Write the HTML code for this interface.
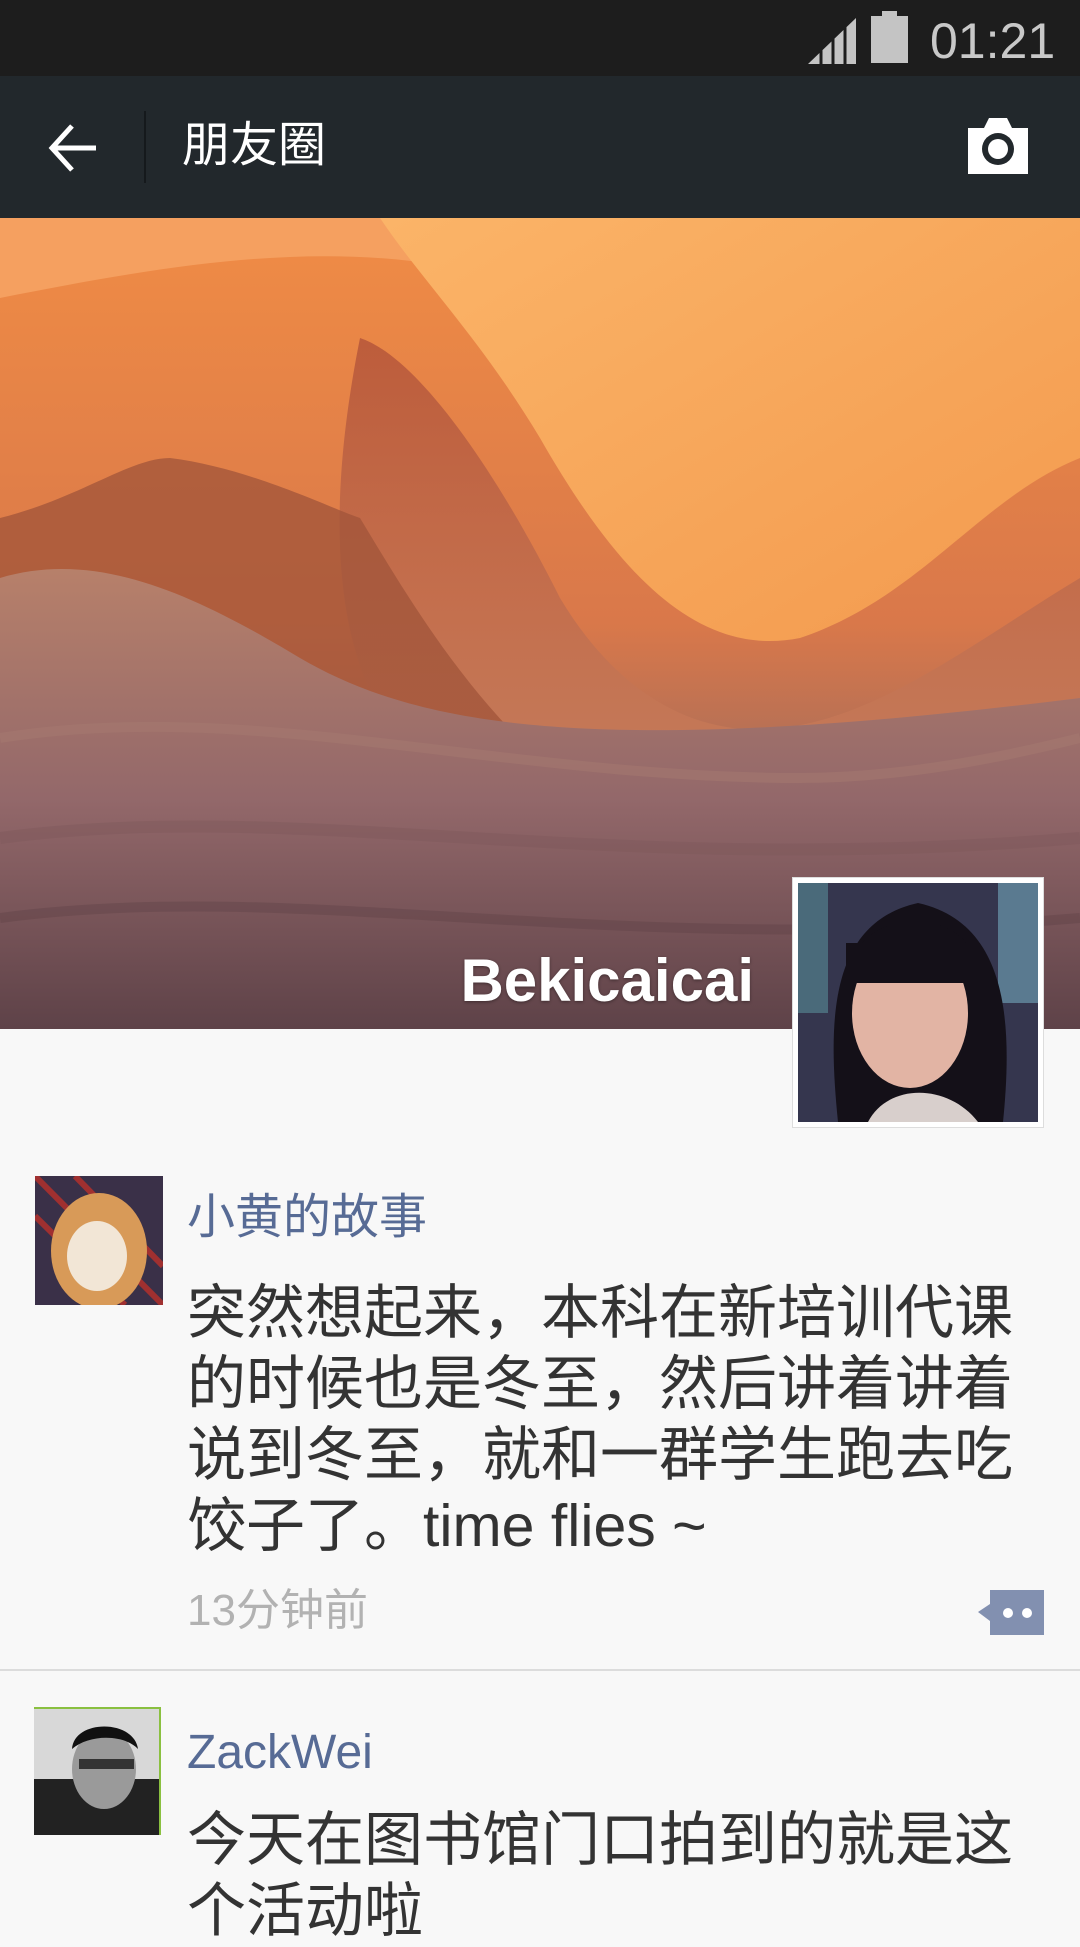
<!DOCTYPE html>
<html><head><meta charset="utf-8">
<style>
*{margin:0;padding:0;box-sizing:border-box}
body{width:1080px;height:1920px;overflow:hidden;background:#f8f8f8;font-family:"Liberation Sans","Noto Sans CJK SC",sans-serif;position:relative}
.abs{position:absolute}
.status{left:0;top:0;width:1080px;height:76px;background:#1d1d1d}
.nav{left:0;top:76px;width:1080px;height:142px;background:#22282c}
.cover{left:0;top:218px;width:1080px;height:811px;overflow:hidden}
.name{color:#576b95;font-size:48px;line-height:60px;white-space:nowrap}
.body{color:#333;font-size:59px;line-height:71px;white-space:nowrap}
</style></head><body>
<div class="abs status">
  <svg class="abs" style="left:808px;top:18px" width="50" height="46"><polygon points="48,0 48,46 0,46" fill="#c4c4c4"/><g stroke="#1d1d1d" stroke-width="3"><line x1="13" y1="0" x2="13" y2="46"/><line x1="25" y1="0" x2="25" y2="46"/><line x1="37" y1="0" x2="37" y2="46"/></g></svg>
  <div class="abs" style="left:882px;top:11px;width:15px;height:6px;background:#c4c4c4"></div>
  <div class="abs" style="left:871px;top:16px;width:37px;height:47px;background:#c4c4c4"></div>
  <div class="abs" style="left:930px;top:12px;font-size:50px;line-height:58px;color:#c8c8c8">01:21</div>
</div>
<div class="abs nav">
  <svg class="abs" style="left:46px;top:46px" width="54" height="52"><path d="M26 4 L6 26 L26 48 M6 26 H50" stroke="#fff" stroke-width="5" fill="none" stroke-linejoin="miter"/></svg>
  <div class="abs" style="left:144px;top:35px;width:2px;height:72px;background:#15191c"></div>
  <div class="abs" style="left:182px;top:40px;font-size:48px;line-height:60px;color:#fff">朋友圈</div>
  <svg class="abs" style="left:964px;top:42px" width="68" height="56"><path d="M4 10 H20 L25 0 H43 L48 10 H64 V56 H4 Z" fill="#fff"/><circle cx="34" cy="31" r="16" fill="#22282c"/><circle cx="34" cy="31" r="10" fill="#fff"/></svg>
</div>
<div class="abs cover">
<svg width="1080" height="811">
<defs>
<linearGradient id="g0" x1="0" y1="0" x2="0" y2="1"><stop offset="0" stop-color="#f08c45"/><stop offset="0.5" stop-color="#d9784a"/><stop offset="0.75" stop-color="#9c6a5e"/><stop offset="1" stop-color="#6e4c52"/></linearGradient>
<linearGradient id="g1" x1="0" y1="0" x2="1" y2="1"><stop offset="0" stop-color="#fbb468"/><stop offset="1" stop-color="#f39a4e"/></linearGradient>
<linearGradient id="g2" x1="0" y1="0" x2="0" y2="1"><stop offset="0" stop-color="#b8583a"/><stop offset="1" stop-color="#c9805e"/></linearGradient>
<linearGradient id="g3" x1="0" y1="0" x2="0" y2="1"><stop offset="0" stop-color="#b7806a"/><stop offset="0.5" stop-color="#93686a"/><stop offset="1" stop-color="#5e4248"/></linearGradient>
</defs>
<rect width="1080" height="811" fill="url(#g0)"/>
<path d="M0 0 H1080 V130 C900 200 700 120 500 60 C350 20 200 40 0 80 Z" fill="#f5a060"/>
<path d="M380 0 H1080 V240 C980 280 920 380 800 420 C700 440 620 360 540 220 C480 120 420 60 380 0 Z" fill="url(#g1)"/>
<path d="M360 120 C420 140 500 260 560 380 C620 480 700 520 780 510 C880 500 980 420 1080 360 V600 C900 620 700 600 500 580 C380 560 300 420 360 120 Z" fill="url(#g2)" opacity="0.9"/>
<path d="M0 300 C80 280 130 240 170 240 C250 250 330 290 360 300 C420 400 470 480 560 560 L0 560 Z" fill="#a0543a" opacity="0.75"/>
<path d="M0 360 C100 330 200 380 300 440 C420 510 600 540 1080 480 V811 H0 Z" fill="url(#g3)"/>
<path d="M0 520 C250 480 500 560 800 560 C900 560 1000 540 1080 520" stroke="#a57a70" stroke-width="10" fill="none" opacity="0.5"/>
<path d="M0 620 C300 580 600 660 1080 620" stroke="#7d585a" stroke-width="12" fill="none" opacity="0.4"/>
<path d="M0 700 C300 660 600 740 1080 700" stroke="#5e4046" stroke-width="10" fill="none" opacity="0.4"/>
</svg>
<div class="abs" style="right:326px;top:728px;font-size:60px;font-weight:bold;color:#fff;line-height:70px;text-shadow:0 1px 3px rgba(0,0,0,.4)">Bekicaicai</div>
</div>
<div class="abs" style="left:792px;top:877px;width:252px;height:251px;background:#fff;border:1px solid #ddd;padding:5px">
<svg width="240" height="239" style="display:block"><rect width="240" height="239" fill="#35364e"/><rect x="200" width="40" height="120" fill="#5a7a90"/><rect width="30" height="130" fill="#4a6a7a"/><path d="M40 239 C30 140 30 40 120 20 C210 40 215 140 205 239 Z" fill="#141018"/><ellipse cx="112" cy="130" rx="58" ry="75" fill="#e2b4a4"/><path d="M50 90 C60 20 180 20 180 95 L180 70 C150 60 80 60 55 80 Z" fill="#141018"/><path d="M48 60 H182 V100 H48 Z" fill="#141018"/><path d="M70 239 C90 200 150 200 180 239 Z" fill="#d8cfcc"/></svg>
</div>
<div class="abs" style="left:35px;top:1176px;width:128px;height:129px;background:#5a3a4a;overflow:hidden">
<svg width="128" height="129"><rect width="128" height="129" fill="#3a3048"/><path d="M0 0 L128 129 M40 0 L128 90 M0 40 L90 129" stroke="#a03030" stroke-width="6"/><ellipse cx="64" cy="75" rx="48" ry="58" fill="#d89a58"/><ellipse cx="62" cy="80" rx="30" ry="35" fill="#f2e6d6"/></svg>
</div>
<div class="abs name" style="left:187px;top:1188px">小黄的故事</div>
<div class="abs body" style="left:187px;top:1278px">突然想起来，本科在新培训代课<br>的时候也是冬至，然后讲着讲着<br>说到冬至，就和一群学生跑去吃<br>饺子了。time flies ~</div>
<div class="abs" style="left:187px;top:1585px;font-size:44px;line-height:52px;color:#b2b2b2">13分钟前</div>
<svg class="abs" style="left:977px;top:1590px" width="68" height="46"><path d="M13 0 H67 V45 H13 V31 L1 22 L13 14 Z" fill="#8290b0"/><circle cx="31" cy="23" r="5" fill="#fff"/><circle cx="50" cy="23" r="5" fill="#fff"/></svg>
<div class="abs" style="left:0;top:1669px;width:1080px;height:2px;background:#dcdcdc"></div>
<div class="abs" style="left:34px;top:1707px;width:127px;height:128px;background:#eee;border-right:2px solid #8ac040;border-top:2px solid #8ac040;overflow:hidden">
<svg width="125" height="126"><rect width="125" height="126" fill="#d8d8d8"/><rect y="70" width="125" height="56" fill="#222"/><ellipse cx="70" cy="60" rx="32" ry="40" fill="#9a9a9a"/><path d="M38 40 C40 10 100 10 104 40 C90 25 55 25 38 40 Z" fill="#111"/><rect x="45" y="50" width="55" height="10" fill="#333"/></svg>
</div>
<div class="abs name" style="left:187px;top:1723px">ZackWei</div>
<div class="abs body" style="left:187px;top:1805px">今天在图书馆门口拍到的就是这<br>个活动啦</div>
</body></html>
